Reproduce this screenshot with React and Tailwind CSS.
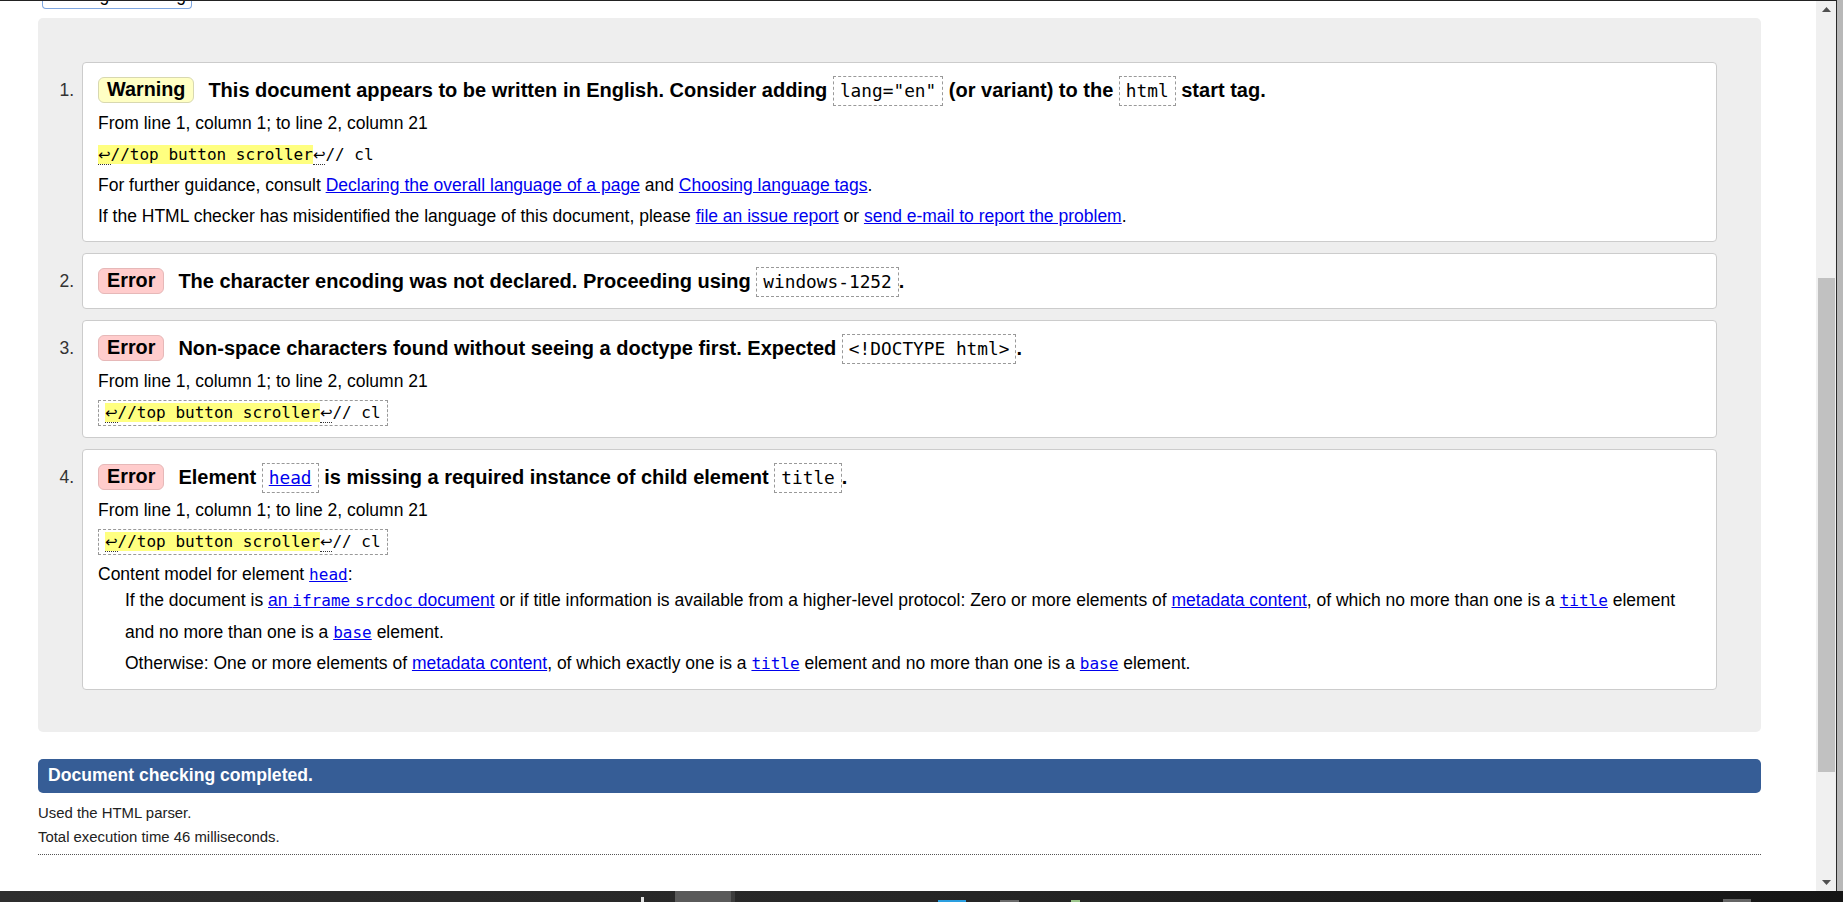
import React from 'react';

const Ret = () => (
  <span className="font-['DejaVu_Sans',sans-serif] text-[15px] border-b border-dotted border-[#333]">↩</span>
);

const Extract = ({ boxed }) => (
  <span
    className={
      boxed
        ? "inline-block border border-dashed border-[#999] px-[6px] leading-[24px] font-['DejaVu_Sans_Mono',monospace] text-[16px]"
        : "inline-block leading-[24px] font-['DejaVu_Sans_Mono',monospace] text-[16px]"
    }
  >
    <span className="bg-[#ffff80]">
      <Ret />//top button scroller
    </span>
    <Ret />// cl
  </span>
);

const TCode = ({ children }) => (
  <span className="inline-block border border-dashed border-[#999] px-[6px] leading-[28px] font-normal font-['DejaVu_Sans_Mono',monospace] text-[17.8px]">
    {children}
  </span>
);

const A = ({ children }) => <a className="text-[#0000ee] underline">{children}</a>;

const M = ({ children }) => (
  <code className="font-['DejaVu_Sans_Mono',monospace] text-[16px]">{children}</code>
);

const Badge = ({ type }) =>
  type === 'warning' ? (
    <span className="inline-flex h-[26px] items-center px-[8px] rounded-[6px] border border-[#d8d8b0] bg-[#ffffc4] font-bold text-[19.8px]">
      Warning
    </span>
  ) : (
    <span className="inline-flex h-[26px] items-center px-[8px] rounded-[6px] border border-[#e6b8b8] bg-[#ffcccc] font-bold text-[19.8px]">
      Error
    </span>
  );

const Line = ({ children }) => (
  <div className="h-[31px] leading-[31px] whitespace-nowrap">{children}</div>
);

const Card = ({ n, type, title, children }) => (
  <li className="flex">
    <div className="w-[44px] shrink-0 pr-[8px] pt-[13px] text-right leading-[30px] text-[#333]">{n}.</div>
    <div className="flex-1 bg-white border border-[#cccccc] rounded-[4px] px-[15px] pt-[12px] pb-[12px]">
      <div className="flex items-center h-[30px] whitespace-nowrap">
        <Badge type={type} />
        <span className="ml-[14px] font-bold text-[20px] leading-[30px]">{title}</span>
      </div>
      {children && <div className="mt-[3px] -mb-[3px]">{children}</div>}
    </div>
  </li>
);

const App = () => {
  return (
    <div className="w-[1843px] h-[902px] overflow-hidden flex flex-col bg-white text-black font-['Liberation_Sans',Arial,sans-serif] text-[17.5px]">
      <div className="flex flex-1 min-h-0">
        <div className="flex flex-1 min-h-0 border-t border-[#222]">
          <div className="flex-1 flex flex-col">
            {/* filter button, mostly scrolled away */}
            <div className="ml-[42px] w-[150px] h-[8px] border-x border-b border-[#7ea6e0] rounded-b-[4px] overflow-hidden bg-white">
              <div className="-mt-[16px] leading-[20px] text-center whitespace-nowrap">Message Filtering</div>
            </div>

            <div className="mt-[9px] ml-[38px] w-[1723px] bg-[#eeeeee] rounded-[5px] pt-[44px] pb-[42px] pr-[44px]">
              <ol className="flex flex-col gap-[11px]">
                <Card
                  n={1}
                  type="warning"
                  title={
                    <>
                      This document appears to be written in English. Consider adding <TCode>lang="en"</TCode> (or
                      variant) to the <TCode>html</TCode> start tag.
                    </>
                  }
                >
                  <Line>From line 1, column 1; to line 2, column 21</Line>
                  <Line>
                    <Extract />
                  </Line>
                  <Line>
                    For further guidance, consult <A>Declaring the overall language of a page</A> and{' '}
                    <A>Choosing language tags</A>.
                  </Line>
                  <Line>
                    If the HTML checker has misidentified the language of this document, please{' '}
                    <A>file an issue report</A> or <A>send e-mail to report the problem</A>.
                  </Line>
                </Card>

                <Card
                  n={2}
                  type="error"
                  title={
                    <>
                      The character encoding was not declared. Proceeding using <TCode>windows-1252</TCode>.
                    </>
                  }
                />

                <Card
                  n={3}
                  type="error"
                  title={
                    <>
                      Non-space characters found without seeing a doctype first. Expected{' '}
                      <TCode>&lt;!DOCTYPE html&gt;</TCode>.
                    </>
                  }
                >
                  <Line>From line 1, column 1; to line 2, column 21</Line>
                  <Line>
                    <Extract boxed />
                  </Line>
                </Card>

                <Card
                  n={4}
                  type="error"
                  title={
                    <>
                      Element{' '}
                      <TCode>
                        <A>head</A>
                      </TCode>{' '}
                      is missing a required instance of child element <TCode>title</TCode>.
                    </>
                  }
                >
                  <Line>From line 1, column 1; to line 2, column 21</Line>
                  <Line>
                    <Extract boxed />
                  </Line>
                  <div className="mt-[6px] h-[22px] leading-[22px] whitespace-nowrap">
                    Content model for element{' '}
                    <A>
                      <M>head</M>
                    </A>
                    :
                  </div>
                  <div className="ml-[27px] leading-[31.5px] whitespace-nowrap">
                    <div>
                      If the document is{' '}
                      <A>
                        an <M>iframe</M> <M>srcdoc</M> document
                      </A>{' '}
                      or if title information is available from a higher-level protocol: Zero or more elements of{' '}
                      <A>metadata content</A>, of which no more than one is a{' '}
                      <A>
                        <M>title</M>
                      </A>{' '}
                      element
                      <br />
                      and no more than one is a{' '}
                      <A>
                        <M>base</M>
                      </A>{' '}
                      element.
                    </div>
                    <div>
                      Otherwise: One or more elements of <A>metadata content</A>, of which exactly one is a{' '}
                      <A>
                        <M>title</M>
                      </A>{' '}
                      element and no more than one is a{' '}
                      <A>
                        <M>base</M>
                      </A>{' '}
                      element.
                    </div>
                  </div>
                </Card>
              </ol>
            </div>

            <div className="mt-[27px] ml-[38px] w-[1723px] h-[34px] bg-[#365d96] rounded-[5px] pl-[10px] flex items-center text-white font-bold text-[17.6px]">
              Document checking completed.
            </div>

            <div className="mt-[8px] ml-[38px] w-[1723px] pb-[5px] border-b border-dotted border-[#555] text-[14.9px] leading-[24px] text-[#222]">
              <div>Used the HTML parser.</div>
              <div>Total execution time 46 milliseconds.</div>
            </div>
          </div>

          {/* scrollbar */}
          <div className="w-[20px] shrink-0 bg-[#f0f0f0] flex flex-col items-center">
            <div className="h-[17px] flex items-center justify-center">
              <svg width="9" height="5" viewBox="0 0 9 5">
                <path d="M0 5 L4.5 0 L9 5 Z" fill="#505050" />
              </svg>
            </div>
            <div className="mt-[260px] ml-[1px] w-[17px] h-[494px] bg-[#c1c1c1]" />
            <div className="flex-1" />
            <div className="h-[17px] flex items-center justify-center">
              <svg width="9" height="5" viewBox="0 0 9 5">
                <path d="M0 0 L4.5 5 L9 0 Z" fill="#505050" />
              </svg>
            </div>
          </div>
        </div>
        {/* window edge */}
        <div className="w-[1px] shrink-0 bg-[#2a2a2a]" />
        <div className="w-[6px] shrink-0 bg-[#b8b8b8]" />
      </div>

      {/* taskbar, cut off */}
      <div className="h-[11px] shrink-0 flex bg-gradient-to-r from-[#2e2e2e] via-[#262626] to-[#151515]">
        <div className="ml-[641px] mt-[6px] w-[3px] h-[5px] bg-[#e0e0e0]" />
        <div className="ml-[31px] w-[56px] h-[11px] bg-[#5a5a5a]" />
        <div className="w-[4px] h-[11px] bg-[#3c3c3c]" />
        <div className="ml-[203px] mt-[9px] w-[28px] h-[2px] bg-[#2a9fe0]" />
        <div className="ml-[34px] mt-[9px] w-[19px] h-[2px] bg-[#6a6a6a]" />
        <div className="ml-[52px] mt-[9px] w-[9px] h-[2px] bg-[#9ac48a]" />
        <div className="ml-[643px] mt-[8px] w-[28px] h-[3px] bg-[#9a9a9a] opacity-60" />
      </div>
    </div>
  );
};

export default App;
